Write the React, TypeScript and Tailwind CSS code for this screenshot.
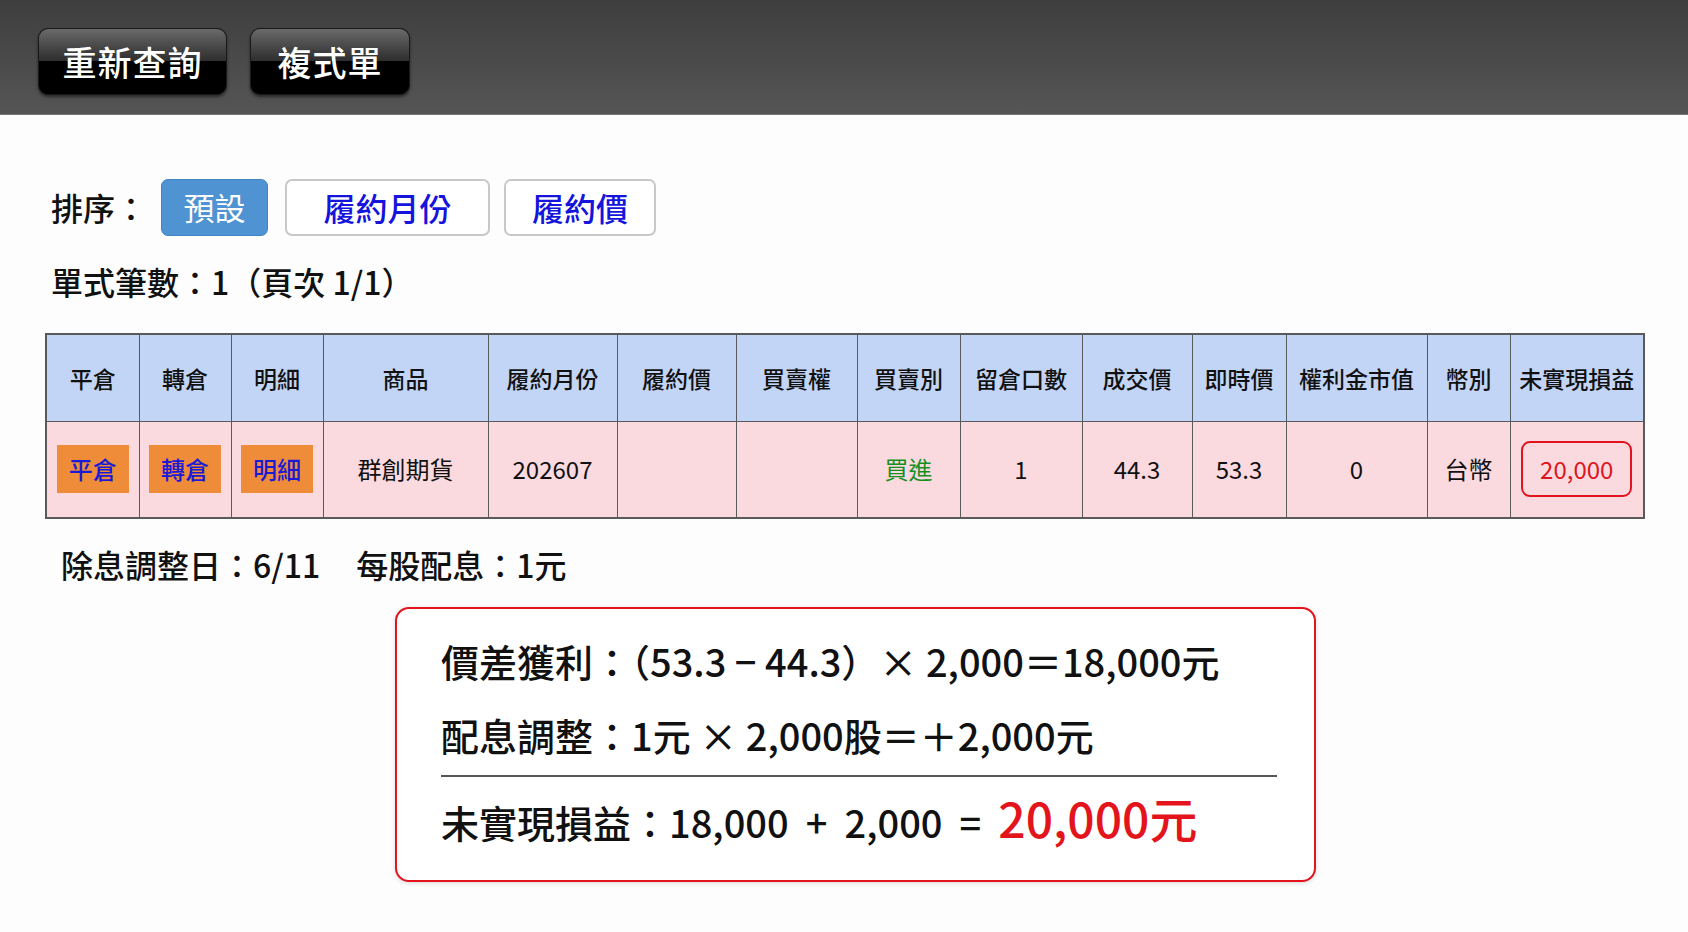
import React from 'react';

const font = "font-['Noto_Sans_CJK_TC','Noto_Sans',sans-serif]";

const headers = [
  { label: '平倉', w: 'w-[93px]' },
  { label: '轉倉', w: 'w-[92px]' },
  { label: '明細', w: 'w-[92px]' },
  { label: '商品', w: 'w-[165px]' },
  { label: '履約月份', w: 'w-[129px]' },
  { label: '履約價', w: 'w-[119px]' },
  { label: '買賣權', w: 'w-[121px]' },
  { label: '買賣別', w: 'w-[103px]' },
  { label: '留倉口數', w: 'w-[122px]' },
  { label: '成交價', w: 'w-[110px]' },
  { label: '即時價', w: 'w-[94px]' },
  { label: '權利金市值', w: 'w-[141px]' },
  { label: '幣別', w: 'w-[83px]' },
  { label: '未實現損益', w: 'w-[134px]' },
];

function GlossButton({ label, w }: { label: string; w: string }) {
  return (
    <button
      className={`relative ${w} h-[67px] rounded-[10px] border border-[#1a1a1a] overflow-hidden shadow-[0_2px_3px_rgba(0,0,0,0.5)] bg-black`}
    >
      <span className="absolute inset-x-0 top-0 h-1/2 bg-gradient-to-b from-[#6a6a6a] to-[#2e2e2e]" />
      <span className="relative text-white text-[34px] font-medium tracking-[1px]">{label}</span>
    </button>
  );
}

function ActionTag({ label }: { label: string }) {
  return (
    <span className="inline-flex items-center justify-center w-[72px] h-[48px] bg-[#ee8c3a] text-[#1a1ad6] text-[24px] font-medium">
      {label}
    </span>
  );
}

export default function App() {
  const td = 'border border-[#5a5a5a] text-center text-[24px] text-[#111]';
  return (
    <div className={`${font} min-h-[932px] bg-[#fdfdfd] text-[#111]`}>
      <div className="h-[115px] bg-gradient-to-b from-[#3e3e3e] to-[#555] flex items-center gap-[23px] pl-[38px] pt-[8px] border-b border-[#777]">
        <GlossButton label="重新查詢" w="w-[189px]" />
        <GlossButton label="複式單" w="w-[160px]" />
      </div>

      <div className="pl-[51px] pt-[63px]">
        <div className="flex items-center h-[58px]">
          <span className="text-[32px] font-medium mr-[14px]">排序：</span>
          <button className="w-[107px] h-[57px] rounded-[7px] bg-[#4f93d2] border border-[#3f84c4] text-white text-[31px] mr-[17px]">
            預設
          </button>
          <button className="w-[205px] h-[57px] rounded-[7px] bg-white border-2 border-[#c8c8c8] text-[#1414dc] text-[32px] font-medium mr-[14px]">
            履約月份
          </button>
          <button className="w-[152px] h-[57px] rounded-[7px] bg-white border-2 border-[#c8c8c8] text-[#1414dc] text-[32px] font-medium">
            履約價
          </button>
        </div>
        <div className="mt-[25px] text-[32px] font-medium leading-[40px]">單式筆數：1（頁次 1/1）</div>
      </div>

      <div className="pl-[45px] mt-[32px]">
        <table className="border-collapse table-fixed w-[1598px] border-2 border-[#5a5a5a]">
          <thead>
            <tr className="h-[87px] bg-[#c3d5f7]">
              {headers.map((h) => (
                <th key={h.label} className={`${h.w} border border-[#5a5a5a] text-[23px] font-medium text-[#111] whitespace-nowrap`}>
                  {h.label}
                </th>
              ))}
            </tr>
          </thead>
          <tbody>
            <tr className="h-[97px] bg-[#fadadf]">
              <td className={td}><ActionTag label="平倉" /></td>
              <td className={td}><ActionTag label="轉倉" /></td>
              <td className={td}><ActionTag label="明細" /></td>
              <td className={td}>群創期貨</td>
              <td className={td}>202607</td>
              <td className={td}></td>
              <td className={td}></td>
              <td className={`${td} text-[#15901f]`}>買進</td>
              <td className={td}>1</td>
              <td className={td}>44.3</td>
              <td className={td}>53.3</td>
              <td className={td}>0</td>
              <td className={td}>台幣</td>
              <td className={td}>
                <span className="inline-flex items-center justify-center w-[111px] h-[56px] rounded-[9px] border-2 border-[#e0141e] text-[#e0141e]">
                  20,000
                </span>
              </td>
            </tr>
          </tbody>
        </table>
      </div>

      <div className="pl-[61px] mt-[25px] text-[32px] font-medium leading-[40px]">
        除息調整日：6/11<span className="inline-block w-[36px]" />每股配息：1元
      </div>

      <div className="ml-[395px] mt-[23px] w-[921px] h-[275px] rounded-[14px] border-2 border-[#e3141c] bg-white px-[44px] pt-[26px] shadow-[0_1px_4px_rgba(0,0,0,0.15)]">
        <div className="text-[38px] font-medium leading-[52px]">
          價差獲利：（53.3 − 44.3）× 2,000＝18,000元
        </div>
        <div className="mt-[22px] text-[38px] font-medium leading-[52px]">
          配息調整：1元 × 2,000股＝＋2,000元
        </div>
        <div className="mt-[14px] h-[2px] w-[836px] bg-[#555]" />
        <div className="mt-[12px] text-[38px] font-medium leading-[56px] flex items-baseline">
          <span className="whitespace-pre">未實現損益：18,000  +  2,000  =  </span>
          <span className="text-[48px] text-[#e3141c]">20,000元</span>
        </div>
      </div>
    </div>
  );
}
